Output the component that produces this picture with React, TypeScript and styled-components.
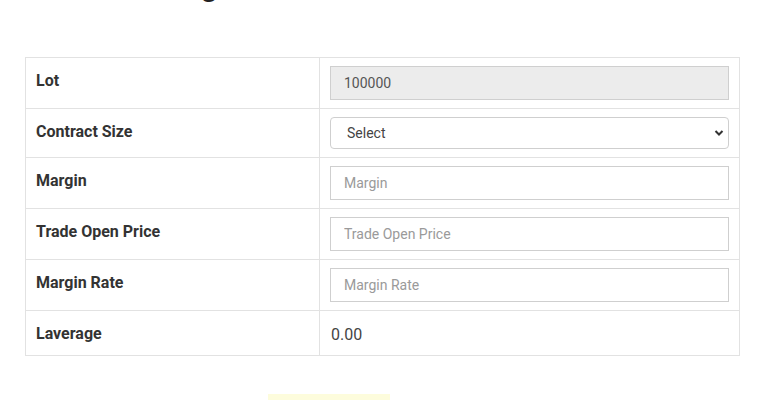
import styled, { createGlobalStyle } from 'styled-components';

const GlobalStyle = createGlobalStyle`
  html, body {
    margin: 0;
    padding: 0;
    background: #fff;
    font-family: Roboto, 'Liberation Sans', Arial, sans-serif;
    overflow: hidden;
  }
  * {
    box-sizing: border-box;
  }
`;

const Page = styled.main`
  width: 761px;
  height: 400px;
  padding: 0 21px 0 25px;
  overflow: hidden;
`;

const Title = styled.h2`
  margin: -32px 0 0;
  padding-left: 8px;
  height: 36px;
  font-size: 30px;
  line-height: 36px;
  font-weight: 700;
  color: #222;
  white-space: nowrap;
`;

const CalcTable = styled.table`
  width: 715px;
  margin-top: 53px;
  border-collapse: collapse;
  border: 1px solid #e2e2e2;
`;

const Row = styled.tr`
  border-bottom: 1px solid #e2e2e2;
`;

const LabelCell = styled.th`
  width: 296px;
  padding: 13px 10px 0;
  vertical-align: top;
  text-align: left;
  font-size: 16px;
  line-height: 19px;
  font-weight: 700;
  color: #333;
  border-right: 1px solid #e2e2e2;
`;

const ValueCell = styled.td<{ $plain?: boolean }>`
  padding: ${(p) => (p.$plain ? '12px 11px 9px' : '8px 10px 8px 10px')};
  vertical-align: top;
  font-size: 16px;
  line-height: 23px;
  color: #444;
`;

const Field = styled.input<{ $readOnly?: boolean }>`
  display: block;
  width: 399px;
  height: 34px;
  padding: 0 13px;
  border: 1px solid #cfcfcf;
  border-radius: 0;
  background: ${(p) => (p.$readOnly ? '#ececec' : '#fff')};
  font-family: Roboto, 'Liberation Sans', Arial, sans-serif;
  font-size: 14px;
  color: #555;
  outline: none;
  &::placeholder {
    color: #9a9a9a;
  }
`;

const SelectWrap = styled.div`
  position: relative;
  width: 399px;
`;

const Select = styled.select`
  display: block;
  width: 100%;
  height: 32px;
  padding: 0 16px;
  border: 1px solid #cfcfcf;
  border-radius: 4px;
  background: #fff;
  appearance: none;
  font-family: Roboto, 'Liberation Sans', Arial, sans-serif;
  font-size: 14px;
  color: #444;
  outline: none;
`;

const Chevron = styled.svg`
  position: absolute;
  right: 5px;
  top: 12px;
  width: 10px;
  height: 8px;
  pointer-events: none;
`;

const Footer = styled.div`
  padding: 38px 0 0 243px;
`;

const SubmitButton = styled.button`
  display: block;
  width: 122px;
  height: 40px;
  border: none;
  background: #fdfcdc;
  font-size: 14px;
`;

export default function App() {
  return (
    <>
      <GlobalStyle />
      <Page>
        <Title>Forex Trading Calculator</Title>
        <CalcTable>
          <tbody>
            <Row>
              <LabelCell>Lot</LabelCell>
              <ValueCell>
                <Field $readOnly readOnly value="100000" />
              </ValueCell>
            </Row>
            <Row>
              <LabelCell>Contract Size</LabelCell>
              <ValueCell>
                <SelectWrap>
                  <Select defaultValue="">
                    <option value="">Select</option>
                    <option value="std">Standard</option>
                    <option value="mini">Mini</option>
                    <option value="micro">Micro</option>
                  </Select>
                  <Chevron viewBox="0 0 10 8">
                    <path d="M1.5 2 L5 5.5 L8.5 2" fill="none" stroke="#333" strokeWidth="2" />
                  </Chevron>
                </SelectWrap>
              </ValueCell>
            </Row>
            <Row>
              <LabelCell>Margin</LabelCell>
              <ValueCell>
                <Field placeholder="Margin" />
              </ValueCell>
            </Row>
            <Row>
              <LabelCell>Trade Open Price</LabelCell>
              <ValueCell>
                <Field placeholder="Trade Open Price" />
              </ValueCell>
            </Row>
            <Row>
              <LabelCell>Margin Rate</LabelCell>
              <ValueCell>
                <Field placeholder="Margin Rate" />
              </ValueCell>
            </Row>
            <Row>
              <LabelCell>Laverage</LabelCell>
              <ValueCell $plain>0.00</ValueCell>
            </Row>
          </tbody>
        </CalcTable>
        <Footer>
          <SubmitButton type="button" />
        </Footer>
      </Page>
    </>
  );
}
